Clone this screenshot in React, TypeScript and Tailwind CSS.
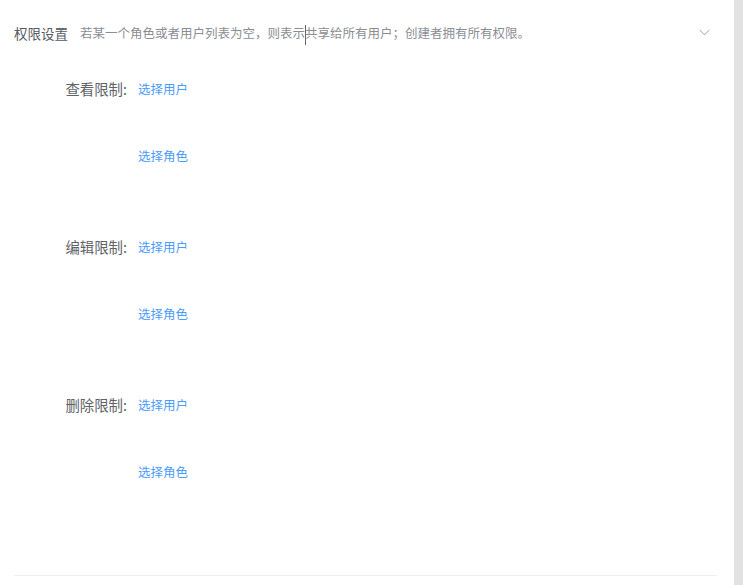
const FONT = { fontFamily: "'Noto Sans CJK SC', 'Noto Sans', sans-serif" };

const GROUPS = ["查看限制", "编辑限制", "删除限制"];

function Row({ label, children }: { label?: string; children: React.ReactNode }) {
  return (
    <div className="flex items-center h-[20px]">
      <div className="w-[113px] text-right text-[14.4px] text-[#606266] leading-[20px]">{label ? `${label}:` : ""}</div>
      <a href="#" className="ml-[11px] text-[12.5px] leading-[20px] text-[#4b9bfa]">{children}</a>
    </div>
  );
}

export default function App() {
  return (
    <div className="w-[743px] h-[585px] bg-white overflow-hidden flex" style={FONT}>
      <div className="flex-1 px-[14px]">
        {/* header */}
        <div className="mt-[23px] h-[20px] flex items-center pr-[10px]">
          <span className="text-[13.5px] text-[#555a61] leading-[20px]">权限设置</span>
          <span className="ml-[12px] text-[12.5px] text-[#8a8d93] leading-[20px]">
            若某一个角色或者用户列表为空，则表示
            <span className="relative inline-block w-0 h-[14px] align-middle">
              <span className="absolute left-0 -top-[3px] w-px h-[20px] bg-[#666]" />
            </span>
            共享给所有用户；创建者拥有所有权限。
          </span>
          <svg className="ml-auto -mt-[2px]" width="11" height="7" viewBox="0 0 11 7" fill="none">
            <path d="M0.5 0.8 L5.5 5.8 L10.5 0.8" stroke="#a0a3a8" strokeWidth="1" />
          </svg>
        </div>

        {/* groups */}
        <div className="mt-[36px] flex flex-col gap-[71px]">
          {GROUPS.map((g) => (
            <div key={g} className="flex flex-col gap-[47px]">
              <Row label={g}>选择用户</Row>
              <Row>选择角色</Row>
            </div>
          ))}
        </div>

        <div className="mt-[93px] mr-[3px] border-b border-[#ebeef5]" />
      </div>
      <div className="w-[9px] h-full bg-[#e2e2e2]" />
    </div>
  );
}
